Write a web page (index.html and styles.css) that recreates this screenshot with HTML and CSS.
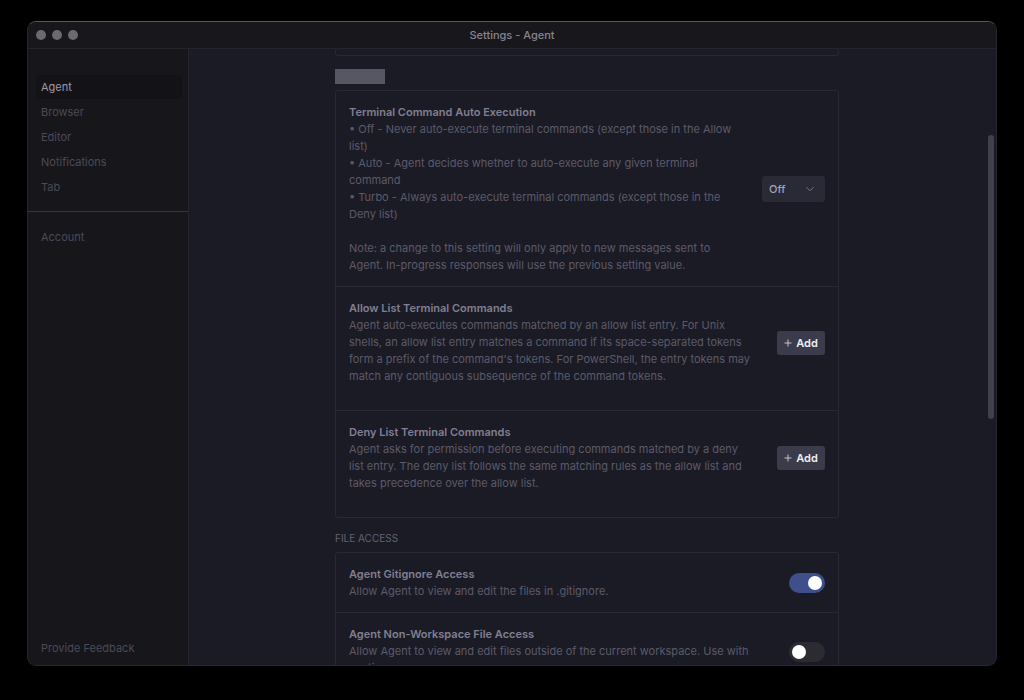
FILE: index.html
```html
<!DOCTYPE html>
<html lang="en">
<head>
  <meta charset="UTF-8" />
  <title>Settings - Agent</title>
  <link rel="stylesheet" href="styles.css">
</head>
<body>

  <div class="window">
    <header class="titlebar">
      <div class="lights">
        <span></span>
        <span></span>
        <span></span>
      </div>
      <h1>Settings - Agent</h1>
    </header>

    <div class="layout">
      <nav class="sidebar">
        <div class="nav-group">
          <a href="#agent" class="active">Agent</a>
          <a href="#browser">Browser</a>
          <a href="#editor">Editor</a>
          <a href="#notifications">Notifications</a>
          <a href="#tab">Tab</a>
        </div>
        <div class="nav-group account">
          <a href="#account">Account</a>
        </div>
        <div class="nav-group feedback">
          <a href="#feedback">Provide Feedback</a>
        </div>
      </nav>

      <main>
        <div class="column">
          <div class="card card-end"></div>

          <div class="section-title"><span class="redacted"></span></div>
          <section class="card">
            <div class="row">
              <div class="text">
                <label for="autoExec">Terminal Command Auto Execution</label>
                <p>• Off - Never auto-execute terminal commands (except those in the Allow list)</p>
                <p>• Auto - Agent decides whether to auto-execute any given terminal command</p>
                <p>• Turbo - Always auto-execute terminal commands (except those in the Deny list)</p>
                <p class="note">Note: a change to this setting will only apply to new messages sent to Agent. In-progress responses will use the previous setting value.</p>
              </div>
              <div class="dropdown">
                <select id="autoExec">
                  <option>Off</option>
                  <option>Auto</option>
                  <option>Turbo</option>
                </select>
                <svg width="10" height="10" viewBox="0 0 10 10"><path d="M1.5 3.2 L5 6.8 L8.5 3.2" /></svg>
              </div>
            </div>
            <div class="row list-row">
              <div class="text">
                <h3>Allow List Terminal Commands</h3>
                <p>Agent auto-executes commands matched by an allow list entry. For Unix shells, an allow list entry matches a command if its space-separated tokens form a prefix of the command's tokens. For PowerShell, the entry tokens may match any contiguous subsequence of the command tokens.</p>
              </div>
              <button class="add"><svg width="8" height="8" viewBox="0 0 8 8"><path d="M4 0.5 V7.5 M0.5 4 H7.5" /></svg>Add</button>
            </div>
            <div class="row list-row">
              <div class="text">
                <h3>Deny List Terminal Commands</h3>
                <p>Agent asks for permission before executing commands matched by a deny list entry. The deny list follows the same matching rules as the allow list and takes precedence over the allow list.</p>
              </div>
              <button class="add"><svg width="8" height="8" viewBox="0 0 8 8"><path d="M4 0.5 V7.5 M0.5 4 H7.5" /></svg>Add</button>
            </div>
          </section>

          <h2 class="section-title">FILE ACCESS</h2>
          <section class="card">
            <div class="row">
              <div class="text">
                <label for="gitignore">Agent Gitignore Access</label>
                <p>Allow Agent to view and edit the files in .gitignore.</p>
              </div>
              <input type="checkbox" class="toggle" id="gitignore" checked>
            </div>
            <div class="row">
              <div class="text">
                <label for="nonWorkspace">Agent Non-Workspace File Access</label>
                <p>Allow Agent to view and edit files outside of the current workspace. Use with caution.</p>
              </div>
              <input type="checkbox" class="toggle" id="nonWorkspace">
            </div>
          </section>
        </div>
        <div class="scroll-thumb"></div>
      </main>
    </div>
  </div>

</body>
</html>
```
FILE: styles.css
```css
* {
  box-sizing: border-box;
}

body {
  margin: 0;
  height: 100vh;
  padding: 21px 27px 34px;
  background: #000;
  font-family: Inter, "Liberation Sans", sans-serif;
  font-size: 11px;
  line-height: 17px;
  color: #5b5a68;
}

h1, h2, h3, p {
  margin: 0;
  font-size: inherit;
  font-weight: 400;
}

.window {
  height: 100%;
  display: flex;
  flex-direction: column;
  overflow: hidden;
  border: 1px solid #26262d;
  border-top-color: #59595d;
  border-radius: 9px;
  background: #1b1b26;
}

.titlebar {
  display: grid;
  grid-template-columns: 1fr auto 1fr;
  align-items: center;
  height: 27px;
  padding: 0 8px;
  background: #18171c;
  border-bottom: 1px solid #24242d;
}

.titlebar h1 {
  font-weight: 500;
  color: #858492;
}

.lights {
  display: flex;
  gap: 6px;
}

.lights span {
  width: 10px;
  height: 10px;
  border-radius: 50%;
  background: #6b6a6f;
}

.layout {
  flex: 1;
  display: flex;
  min-height: 0;
}

.sidebar {
  flex: 0 0 161px;
  display: flex;
  flex-direction: column;
  padding-top: 26px;
  background: #17161b;
  border-right: 1px solid #24242d;
}

.nav-group {
  display: flex;
  flex-direction: column;
  gap: 1px;
  padding: 0 6px 12px 8px;
}

.nav-group a {
  padding: 4px 5px 3px;
  border-radius: 4px;
  color: #4b4a57;
  text-decoration: none;
}

.nav-group a.active {
  background: #131217;
  color: #9a99ac;
}

.account {
  border-top: 1px solid #36363c;
  padding-top: 13px;
}

.feedback {
  margin-top: auto;
  padding-bottom: 5px;
}

main {
  position: relative;
  flex: 1;
  min-width: 0;
  padding: 0 11px 0 0;
  overflow: hidden;
}

.column {
  max-width: 504px;
  margin: 0 auto;
}

.card {
  border: 1px solid #292933;
  border-radius: 3px;
}

.card-end {
  height: 7px;
  border-top: 0;
}

.section-title {
  margin: 13px 0 6px;
  height: 15px;
  font-size: 10px;
  line-height: 15px;
  color: #62616f;
}

.redacted {
  display: block;
  width: 50px;
  height: 15px;
  background: #575663;
}

.row {
  display: flex;
  align-items: center;
  justify-content: space-between;
  gap: 24px;
  padding: 13px 13px 12px;
}

.row + .row {
  border-top: 1px solid #292933;
}

.list-row {
  padding-bottom: 25px;
}

.text {
  min-width: 0;
}

.text label, .text h3 {
  display: block;
  font-weight: 600;
  color: #807f91;
}

.note {
  padding-top: 17px;
}

.dropdown {
  position: relative;
  flex: none;
}

.dropdown select {
  display: block;
  width: 63px;
  height: 26px;
  padding: 0 7px;
  appearance: none;
  border: none;
  border-radius: 3px;
  background: #292a35;
  color: #a3a2b8;
  font: 500 11px Inter, sans-serif;
}

.dropdown svg {
  position: absolute;
  top: 8px;
  right: 10px;
  pointer-events: none;
}

svg path {
  fill: none;
  stroke: #777685;
}

.add {
  flex: none;
  display: flex;
  align-items: center;
  justify-content: center;
  gap: 4px;
  width: 48px;
  height: 24px;
  padding: 0;
  border: none;
  border-radius: 3px;
  background: #3b3b4b;
  color: #eeeef2;
  font: 600 11px Inter, sans-serif;
}

.add path {
  stroke: #c4c4cc;
}

.toggle {
  flex: none;
  appearance: none;
  width: 36px;
  height: 20px;
  margin: 0;
  padding: 3px;
  border-radius: 10px;
  background: #2b2b31;
}

.toggle::before {
  content: "";
  display: block;
  width: 14px;
  height: 14px;
  border-radius: 50%;
  background: #fff;
}

.toggle:checked {
  background: #3f4f8c;
}

.toggle:checked::before {
  margin-left: auto;
}

.scroll-thumb {
  position: absolute;
  top: 14%;
  right: 2px;
  width: 6px;
  height: 46%;
  border-radius: 3px;
  background: #40404c;
}
```
